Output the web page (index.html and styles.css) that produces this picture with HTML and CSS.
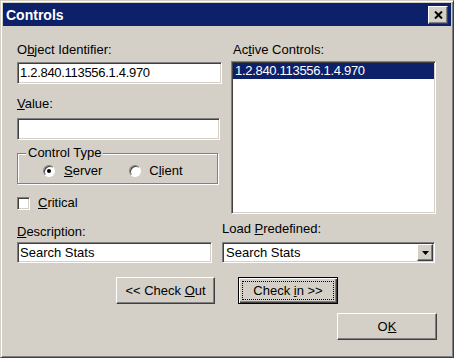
FILE: index.html
```html
<!DOCTYPE html>
<html>

<head lang="en">
	<meta charset="UTF-8">
	<title>Controls</title>
	<link rel="stylesheet" href="styles.css">
</head>

<body>
	<div class="dialog">
		<div class="titlebar">
			<span class="title">Controls</span>
			<span class="close">
				<svg width="9" height="8" viewBox="0 0 9 8"><path d="M1 0.5L8 7.5M8 0.5L1 7.5" stroke="#000" stroke-width="2" fill="none"/></svg>
			</span>
		</div>
		<div class="content">
			<div class="top">
				<div class="col-left">
					<div class="label">O<u>b</u>ject Identifier:</div>
					<div class="field oid">1.2.840.113556.1.4.970</div>
					<div class="label label-value"><u>V</u>alue:</div>
					<div class="field field-value"></div>
					<div class="group">
						<span class="group-title">Control Type</span>
						<div class="radios">
							<span class="radio"><span class="circle"><span class="dot"></span></span><span><u>S</u>erver</span></span>
							<span class="radio radio-client"><span class="circle"></span><span>C<u>l</u>ient</span></span>
						</div>
					</div>
					<div class="check"><span class="box"></span><span><u>C</u>ritical</span></div>
				</div>
				<div class="col-right">
					<div class="label label-active">Ac<u>t</u>ive Controls:</div>
					<div class="listbox">
						<div class="item selected oid">1.2.840.113556.1.4.970</div>
					</div>
				</div>
			</div>
			<div class="bottom">
				<div class="col-desc">
					<div class="label label-desc"><u>D</u>escription:</div>
					<div class="field field-desc">Search Stats</div>
				</div>
				<div class="col-load">
					<div class="label">Load <u>P</u>redefined:</div>
					<div class="combo">
						<span class="combo-text">Search Stats</span>
						<span class="drop">
							<svg width="7" height="4" viewBox="0 0 7 4"><path d="M0 0H7L3.5 4Z" fill="#000"/></svg>
						</span>
					</div>
				</div>
			</div>
			<div class="actions">
				<button type="button" class="btn btn-check"><span>&lt;&lt; Check <u>O</u>ut</span></button>
				<button type="button" class="btn btn-check btn-default"><span class="focus"><span>Check <u>i</u>n &gt;&gt;</span></span></button>
			</div>
			<div class="confirm">
				<button type="button" class="btn btn-ok"><span>O<u>K</u></span></button>
			</div>
		</div>
	</div>
</body>

</html>
```

FILE: styles.css
```css
* {
	margin: 0;
	padding: 0;
	box-sizing: border-box;
}

body {
	width: 454px;
	height: 358px;
	overflow: hidden;
	background: #d4d0c8;
	color: #000;
	font: 13px/16px "Liberation Sans", Arial, sans-serif;
}

.dialog {
	width: 454px;
	height: 358px;
	padding: 2px;
	border: 1px solid;
	border-color: #d4d0c8 #404040 #404040 #d4d0c8;
	box-shadow: inset 1px 1px #fff, inset -1px -1px #808080;
}

.titlebar {
	height: 23px;
	display: flex;
	justify-content: space-between;
	align-items: center;
	padding: 0 3px 0 3px;
	background: #0c216a;
}

.title {
	color: #fff;
	font-weight: bold;
	font-size: 14px;
}

.close {
	width: 20px;
	height: 18px;
	display: flex;
	align-items: center;
	justify-content: center;
	background: #d4d0c8;
	border: 1px solid;
	border-color: #fff #404040 #404040 #fff;
	box-shadow: inset -1px -1px #808080;
}

.content {
	padding: 16px 14px 0 14px;
}

.top {
	display: flex;
	gap: 9px;
	align-items: flex-start;
}

.col-left,
.col-right {
	width: 205px;
}

.label {
	height: 16px;
	white-space: nowrap;
}

.oid {
	letter-spacing: -0.3px;
}

.field {
	height: 22px;
	margin-top: 4px;
	display: flex;
	align-items: center;
	padding: 1px 2px;
	background: #fff;
	white-space: nowrap;
	border: 1px solid;
	border-color: #808080 #fff #fff #808080;
	box-shadow: inset 1px 1px #404040, inset -1px -1px #d4d0c8;
}

.label-value {
	margin-top: 12px;
}

.field-value {
	width: 203px;
	margin-top: 6px;
}

.group {
	position: relative;
	width: 201px;
	margin-top: 13px;
	padding: 9px 0 4px 0;
	border: 1px solid #808080;
	box-shadow: inset 1px 1px #fff, 1px 1px #fff;
}

.group-title {
	position: absolute;
	top: -9px;
	left: 8px;
	padding: 0 2px;
	background: #d4d0c8;
}

.radios {
	display: flex;
	height: 16px;
	align-items: center;
	padding-left: 25px;
}

.radio {
	display: flex;
	align-items: center;
	gap: 9px;
}

.radio-client {
	margin-left: 27px;
	gap: 8px;
}

.circle {
	width: 12px;
	height: 12px;
	border-radius: 50%;
	display: flex;
	align-items: center;
	justify-content: center;
	background: #fff;
	border: 1px solid;
	border-color: #808080 #fff #fff #808080;
	box-shadow: inset 1px 1px #404040;
}

.dot {
	width: 4px;
	height: 4px;
	border-radius: 50%;
	background: #000;
}

.check {
	margin-top: 11px;
	height: 16px;
	display: flex;
	align-items: center;
	gap: 8px;
}

.box {
	width: 13px;
	height: 13px;
	background: #fff;
	border: 1px solid;
	border-color: #808080 #fff #fff #808080;
	box-shadow: inset 1px 1px #404040, inset -1px -1px #d4d0c8;
}

.label-active {
	margin-left: 2px;
}

.listbox {
	height: 153px;
	margin-top: 3px;
	padding: 1px;
	background: #fff;
	border: 1px solid;
	border-color: #808080 #fff #fff #808080;
	box-shadow: inset 1px 1px #404040, inset -1px -1px #d4d0c8;
}

.item {
	height: 16px;
	padding-left: 2px;
}

.item.selected {
	background: #0c216a;
	color: #fff;
}

.bottom {
	display: flex;
	gap: 10px;
	margin-top: 7px;
}

.col-desc {
	width: 195px;
}

.label-desc {
	margin-top: 3px;
}

.field-desc {
	height: 21px;
	margin-top: 2px;
}

.col-load {
	width: 213px;
}

.combo {
	height: 21px;
	margin-top: 5px;
	display: flex;
	padding: 1px;
	background: #fff;
	border: 1px solid;
	border-color: #808080 #fff #fff #808080;
	box-shadow: inset 1px 1px #404040, inset -1px -1px #d4d0c8;
}

.combo-text {
	flex: 1;
	padding-left: 2px;
	display: flex;
	align-items: center;
}

.drop {
	width: 16px;
	display: flex;
	align-items: center;
	justify-content: center;
	background: #d4d0c8;
	border: 1px solid;
	border-color: #fff #404040 #404040 #fff;
	box-shadow: inset -1px -1px #808080;
}

.actions {
	display: flex;
	justify-content: center;
	gap: 23px;
	margin-top: 14px;
}

.confirm {
	display: flex;
	justify-content: flex-end;
	margin-top: 9px;
}

.btn {
	height: 27px;
	display: flex;
	align-items: center;
	justify-content: center;
	font: inherit;
	color: #000;
	background: #d4d0c8;
	border: 1px solid;
	border-color: #fff #404040 #404040 #fff;
	box-shadow: inset -1px -1px #808080;
	white-space: nowrap;
}

.btn-check {
	width: 99px;
}

.btn-default {
	width: 100px;
	padding: 3px;
	border-color: #000;
	box-shadow: inset 1px 1px #fff, inset -1px -1px #404040, inset -2px -2px #808080;
}

.btn-default .focus {
	flex: 1;
	align-self: stretch;
	display: flex;
	align-items: center;
	justify-content: center;
	border: 1px dotted #000;
}

.btn-ok {
	width: 100px;
}
```
